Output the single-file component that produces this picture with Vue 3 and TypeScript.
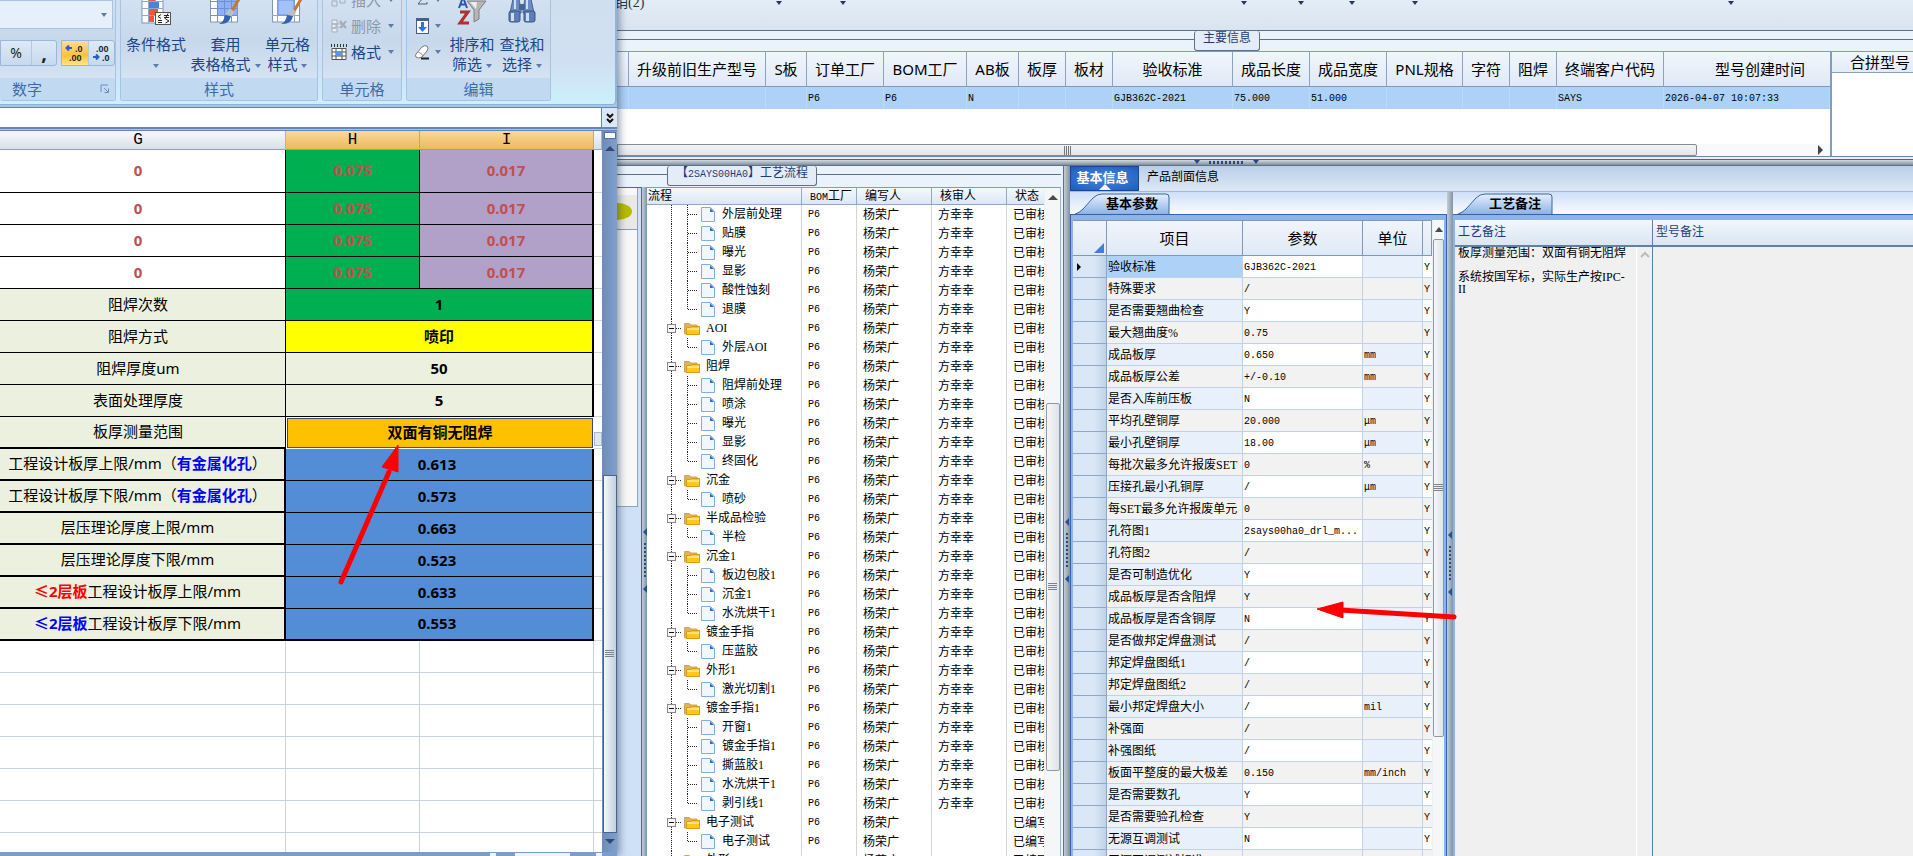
<script setup lang="ts">
interface MainColumn {
  label: string
  width?: number
  value: string
}

interface SheetRow {
  kind: 'green' | 'yellow' | 'pale' | 'orange' | 'blue'
  mark?: string
  tone?: string
  label: string
  note?: string
  value: string
}

interface FlowRow {
  name: string
  folder: boolean
  last: boolean
  reviewer: string
  state: string
}

const mainColumns: MainColumn[] = [
  { label: '', width: 12, value: '' },
  { label: '升级前旧生产型号', width: 137, value: '' },
  { label: 'S板', width: 41, value: '' },
  { label: '订单工厂', width: 77, value: 'P6' },
  { label: 'BOM工厂', width: 83, value: 'P6' },
  { label: 'AB板', width: 52, value: 'N' },
  { label: '板厚', width: 47, value: '' },
  { label: '板材', width: 47, value: '' },
  { label: '验收标准', width: 120, value: 'GJB362C-2021' },
  { label: '成品长度', width: 77, value: '75.000' },
  { label: '成品宽度', width: 77, value: '51.000' },
  { label: 'PNL规格', width: 76, value: '' },
  { label: '字符', width: 47, value: '' },
  { label: '阻焊', width: 47, value: '' },
  { label: '终端客户代码', width: 107, value: 'SAYS' },
  { label: '型号创建时间', value: '2026-04-07 10:07:33' },
]

const sheetRows: SheetRow[] = [
  { kind: 'green', label: '阻焊次数', value: '1' },
  { kind: 'yellow', label: '阻焊方式', value: '喷印' },
  { kind: 'pale', label: '阻焊厚度um', value: '50' },
  { kind: 'pale', label: '表面处理厚度', value: '5' },
  { kind: 'orange', label: '板厚测量范围', value: '双面有铜无阻焊' },
  { kind: 'blue', label: '工程设计板厚上限/mm', note: '有金属化孔', value: '0.613' },
  { kind: 'blue', label: '工程设计板厚下限/mm', note: '有金属化孔', value: '0.573' },
  { kind: 'blue', label: '层压理论厚度上限/mm', value: '0.663' },
  { kind: 'blue', label: '层压理论厚度下限/mm', value: '0.523' },
  { kind: 'blue', mark: '≤2层板', tone: 'red', label: '工程设计板厚上限/mm', value: '0.633' },
  { kind: 'blue', mark: '≤2层板', tone: 'navy', label: '工程设计板厚下限/mm', value: '0.553' },
]

const flowGroups: [string, string[]][] = [
  ['', ['外层前处理', '贴膜', '曝光', '显影', '酸性蚀刻', '退膜']],
  ['AOI', ['外层AOI']],
  ['阻焊', ['阻焊前处理', '喷涂', '曝光', '显影', '终固化']],
  ['沉金', ['喷砂']],
  ['半成品检验', ['半检']],
  ['沉金1', ['板边包胶1', '沉金1', '水洗烘干1']],
  ['镀金手指', ['压蓝胶']],
  ['外形1', ['激光切割1']],
  ['镀金手指1', ['开窗1', '镀金手指1', '撕蓝胶1', '水洗烘干1', '剥引线1']],
  ['电子测试', ['电子测试']],
  ['外形', []],
]

const flowRows: FlowRow[] = flowGroups.flatMap(([group, children], index) => {
  const done = index < 9
  const base = { reviewer: done ? '方幸幸' : '', state: done ? '已审核' : '已编写' }
  const head = group ? [{ name: group, folder: true, last: false, ...base }] : []
  return [
    ...head,
    ...children.map((name, i) => ({ name, folder: false, last: i === children.length - 1, ...base })),
  ]
})

const params: [string, string, string][] = [
  ['验收标准', 'GJB362C-2021', ''],
  ['特殊要求', '/', ''],
  ['是否需要翘曲检查', 'Y', ''],
  ['最大翘曲度%', '0.75', ''],
  ['成品板厚', '0.650', 'mm'],
  ['成品板厚公差', '+/-0.10', 'mm'],
  ['是否入库前压板', 'N', ''],
  ['平均孔壁铜厚', '20.000', 'μm'],
  ['最小孔壁铜厚', '18.00', 'μm'],
  ['每批次最多允许报废SET', '0', '%'],
  ['压接孔最小孔铜厚', '/', 'μm'],
  ['每SET最多允许报废单元', '0', ''],
  ['孔符图1', '2says00ha0_drl_m...', ''],
  ['孔符图2', '/', ''],
  ['是否可制造优化', 'Y', ''],
  ['成品板厚是否含阻焊', 'Y', ''],
  ['成品板厚是否含铜厚', 'N', ''],
  ['是否做邦定焊盘测试', '/', ''],
  ['邦定焊盘图纸1', '/', ''],
  ['邦定焊盘图纸2', '/', ''],
  ['最小邦定焊盘大小', '/', 'mil'],
  ['补强面', '/', ''],
  ['补强图纸', '/', ''],
  ['板面平整度的最大极差', '0.150', 'mm/inch'],
  ['是否需要数孔', 'Y', ''],
  ['是否需要验孔检查', 'Y', ''],
  ['无源互调测试', 'N', ''],
  ['无源互调测试标准', '', 'dB'],
]

const memo = '板厚测量范围：双面有铜无阻焊\n\n系统按国军标，实际生产按IPC-\nII'
const toolbarCarets = [779, 843, 1244, 1301, 1352, 1415, 1731]
</script>

<template>
  <main class="desktop">
    <section class="excel">
      <div class="ribbon">
        <div class="group number">
          <div class="body">
            <button class="format-box" aria-label="数字格式"><i class="caret"></i></button>
            <div class="num-row">
              <div class="seg">
                <button class="percent">%</button>
                <button class="comma">,</button>
              </div>
              <div class="seg decimals">
                <button class="on" aria-label="增加小数位数">
                  <svg width="20" height="20" viewBox="0 0 20 20">
                    <path d="M7 5H2M4 2.500L1.500 5L4 7.500" fill="none" stroke="#2a5fc0" stroke-width="2" />
                    <text x="10" y="9">.0</text><text x="4" y="18">.00</text>
                  </svg>
                </button>
                <button aria-label="减少小数位数">
                  <svg width="20" height="20" viewBox="0 0 20 20">
                    <path d="M1 14H6M4 11.500L6.500 14L4 16.500" fill="none" stroke="#2a5fc0" stroke-width="2" />
                    <text x="4" y="9">.00</text><text x="10" y="18">.0</text>
                  </svg>
                </button>
              </div>
            </div>
          </div>
          <div class="caption">
            <span>数字</span>
            <svg class="launcher" width="10" height="10" viewBox="0 0 10 10">
              <path d="M1 8V1H8M4 4L8 8M8.500 4.500V8.500H4.500" fill="none" stroke="#6b8fbd" />
            </svg>
          </div>
        </div>

        <div class="group styles">
          <div class="body">
            <button class="big">
              <svg width="30" height="28" viewBox="0 0 30 28">
                <rect x="1" y="-2" width="21" height="28" fill="#fff" stroke="#7f95b8" />
                <path d="M1 4.500H22M1 11.500H22M1 18.500H22M7.500 0V26M14.500 0V26" stroke="#93a8c8" />
                <path d="M8 0h6v4H8zM8 12h9v6H8z" fill="#f0573a" />
                <path d="M8 5h10v6H8z" fill="#4a80e6" />
                <path d="M8 19h5v6H8z" fill="#f0573a" />
                <rect x="14.500" y="15.500" width="15" height="12" fill="#f6f6f6" stroke="#555" />
                <path d="M20 17.500L17 19.500L20 21.500M17 23.500H21M17 25.500H21M24.500 22L28 24L24.500 26M23 18.500h5M23 20.500h5M27 16.500L24 22" fill="none" stroke="#222" />
              </svg>
              <span>条件格式</span>
              <span class="solo"><i class="caret"></i></span>
            </button>
            <button class="big">
              <svg width="32" height="28" viewBox="0 0 32 28">
                <rect x="1.500" y="-2" width="27" height="27" fill="#fff" stroke="#7f95b8" />
                <path d="M8 3h20v15H8z" fill="#8db0f2" />
                <path d="M1 4.500H28M1 11.500H28M1 18.500H28M8.500 0V25M15.500 0V25M22.500 0V25" stroke="#6f8fd0" />
                <path d="M30 2L23 14" stroke="#c07a34" stroke-width="3" stroke-linecap="round" />
                <path d="M23 13L19 19" stroke="#b9bfc8" stroke-width="6" />
                <path d="M22 19Q20 28 10 27Q15 25 16 18Z" fill="#2f62b5" />
              </svg>
              <span>套用</span>
              <span>表格格式<i class="caret"></i></span>
            </button>
            <button class="big">
              <svg width="32" height="28" viewBox="0 0 32 28">
                <rect x="1.500" y="-2" width="27" height="27" fill="#fff" stroke="#7f95b8" />
                <path d="M1 18.500H28M6.500 0V25M23.500 0V25" stroke="#93a8c8" />
                <path d="M7 3h16v15H7z" fill="#a3c2fa" stroke="#6a90e0" />
                <path d="M30 2L23 14" stroke="#c07a34" stroke-width="3" stroke-linecap="round" />
                <path d="M23 13L19 19" stroke="#b9bfc8" stroke-width="6" />
                <path d="M22 19Q20 28 10 27Q15 25 16 18Z" fill="#2f62b5" />
              </svg>
              <span>单元格</span>
              <span>样式<i class="caret"></i></span>
            </button>
          </div>
          <div class="caption"><span>样式</span></div>
        </div>

        <div class="group cells">
          <div class="body">
            <button class="small off">
              <svg width="18" height="18" viewBox="0 0 18 18"><path d="M2 3h5v4H2zM2 10h5v5H2zM10 8h5v4h-5z" fill="none" stroke="#a3adba" /></svg>
              插入<i class="caret"></i>
            </button>
            <button class="small off">
              <svg width="18" height="18" viewBox="0 0 18 18">
                <path d="M2 3h5v4H2zM2 7h4v4H2zM2 11h5v4H2zM7 7h4v3H7z" fill="#e9edf3" stroke="#a3adba" />
                <path d="M10 4L16 11M16 4L11 11" stroke="#a3adba" stroke-width="2" />
              </svg>
              删除<i class="caret"></i>
            </button>
            <button class="small">
              <svg width="18" height="18" viewBox="0 0 18 18">
                <path d="M1 2.500H17" stroke="#333" stroke-width="3" stroke-dasharray="1 2" />
                <path d="M2 5.500h14v11H2zM2 9H16M2 13H16M6 5V16M12 5V16" fill="#fff" stroke="#555" />
                <path d="M6 8h6v5H6z" fill="#5b95ea" />
              </svg>
              格式<i class="caret"></i>
            </button>
          </div>
          <div class="caption"><span>单元格</span></div>
        </div>

        <div class="group edit">
          <div class="body">
            <div class="stack">
              <button class="small" aria-label="自动求和">
                <svg width="18" height="18" viewBox="0 0 18 18"><path d="M12 3V2H5L9 7L4 13H13V11" fill="none" stroke="#4a5f86" /></svg>
                <i class="caret"></i>
              </button>
              <button class="small" aria-label="填充">
                <svg width="18" height="18" viewBox="0 0 18 18">
                  <rect x="2.500" y="1.500" width="12" height="15" fill="#fff" stroke="#4a5f86" />
                  <path d="M2 3H15" stroke="#4a5f86" stroke-width="2" />
                  <path d="M7 5h3v5h3l-4.500 5L4 10h3z" fill="#2f74e0" />
                </svg>
                <i class="caret"></i>
              </button>
              <button class="small" aria-label="清除">
                <svg width="18" height="18" viewBox="0 0 18 18">
                  <path d="M2 11L8 4Q10 2 13 3Q15 5 13 8L8 14Q4 16 2 14Q1 13 2 11Z" fill="#fff" stroke="#777" />
                  <path d="M4 9Q8 10 9 13" fill="none" stroke="#999" />
                  <path d="M7 15.500H15" stroke="#222" stroke-width="2" />
                </svg>
                <i class="caret"></i>
              </button>
            </div>
            <button class="big">
              <svg width="30" height="28" viewBox="0 0 30 28">
                <path d="M2 11L6 0L10 11M3 7.500H9" fill="none" stroke="#2c56a8" stroke-width="2" />
                <path d="M3 15H11L3 26H12" fill="none" stroke="#b03030" stroke-width="3" />
                <path d="M10 4H29L22 13V22L17 25V13Z" fill="#b9b5b0" stroke="#7c8088" />
                <path d="M13 5H20L19 12Z" fill="#eceef1" />
              </svg>
              <span>排序和</span>
              <span>筛选<i class="caret"></i></span>
            </button>
            <button class="big">
              <svg width="30" height="28" viewBox="0 0 30 28">
                <path d="M6 2h6l2 11v3H3Z" fill="#6d8dc0" stroke="#4b6496" />
                <path d="M18 2h6l3 14H16v-3Z" fill="#6d8dc0" stroke="#4b6496" />
                <path d="M12 7h6v6h-6z" fill="#48659a" />
                <rect x="2" y="14" width="11" height="11" rx="2" fill="#5d7fb8" stroke="#3b5486" />
                <rect x="17" y="14" width="11" height="11" rx="2" fill="#5d7fb8" stroke="#3b5486" />
                <path d="M4 16h3v8H4zM19 16h3v8h-3zM7 3h2v9H7zM19 3h2v9h-2z" fill="#cfdcf2" />
              </svg>
              <span>查找和</span>
              <span>选择<i class="caret"></i></span>
            </button>
          </div>
          <div class="caption"><span>编辑</span></div>
        </div>
      </div>

      <div class="formula">
        <input aria-label="编辑栏" />
        <button aria-label="展开编辑栏">
          <svg width="10" height="12" viewBox="0 0 10 12"><path d="M2 2L5 5L8 2M2 7L5 10L8 7" fill="none" stroke="#111" stroke-width="2" /></svg>
        </button>
      </div>

      <div class="sheet-area">
        <div class="sheet-clip">
          <table class="sheet">
            <colgroup><col class="g" /><col class="h" /><col /><col class="edge" /></colgroup>
            <thead>
              <tr><th class="pad">G</th><th class="hot">H</th><th class="hot">I</th><th></th></tr>
            </thead>
            <tbody>
              <tr v-for="n in 4" :key="'s' + n" class="split" :class="{ tall: n === 1 }">
                <td class="pad">0</td><td class="fill-green">0.075</td><td class="fill-purple">0.017</td><td class="edge"></td>
              </tr>
              <tr v-for="row in sheetRows" :key="row.mark + row.label + row.value" :class="'row-' + row.kind">
                <td class="label pad">
                  <b v-if="row.mark" :class="row.tone">{{ row.mark }}</b>{{ row.label }}<template v-if="row.note">（<b class="navy">{{ row.note }}</b>）</template>
                </td>
                <td class="value" colspan="2">{{ row.value }}</td>
                <td class="edge"><i v-if="row.kind === 'orange'" class="drop"></i></td>
              </tr>
              <tr v-for="n in 7" :key="'b' + n" class="blank"><td></td><td></td><td></td><td class="edge"></td></tr>
            </tbody>
          </table>
        </div>
        <div class="xl-scroll">
          <i class="splitbox"></i>
          <i class="tri up"></i>
          <div class="gap"></div>
          <div class="thumb"><i class="grip"></i></div>
          <i class="tri down"></i>
        </div>
      </div>
      <div class="xl-bottom"><i class="a"></i><i class="b"></i><i class="c"></i></div>
    </section>

    <section class="app">
      <div class="toolbar">
        <span class="tool-text">销(2)</span>
        <i v-for="x in toolbarCarets" :key="x" class="caret dark" :style="{ left: x - 620 + 'px' }"></i>
      </div>

      <div class="main-info">
        <div class="legend center"><span>主要信息</span></div>
        <div class="main-row">
          <div class="main-left">
            <table class="main-table">
              <colgroup><col v-for="(c, i) in mainColumns" :key="i" :style="c.width ? { width: c.width + 'px' } : {}" /></colgroup>
              <thead><tr><th v-for="(c, i) in mainColumns" :key="i">{{ c.label }}</th></tr></thead>
              <tbody><tr><td v-for="(c, i) in mainColumns" :key="i" class="half">{{ c.value }}</td></tr></tbody>
            </table>
            <div class="space"></div>
            <div class="hscroll"><div class="hthumb"><i></i></div><i class="right"></i></div>
          </div>
          <div class="merge"><div class="merge-head">合拼型号</div></div>
        </div>
      </div>
      <div class="hsplit"><i class="tri down"></i><i class="dots"></i><i class="tri down"></i></div>

      <div class="lower">
        <div class="flow">
          <div class="legend"><span>【<em class="half">2SAYS00HA0</em>】工艺流程</span></div>
          <div class="flow-row">
            <div class="side">
              <div class="side-box"><div class="side-head"><i></i></div></div>
            </div>
            <div class="vsplit"><i class="tri left"></i><i class="dots"></i><i class="tri left"></i></div>
            <div class="tree-box">
              <table class="tree">
                <colgroup><col class="c1" /><col class="c2" /><col class="c3" /><col class="c3" /><col /></colgroup>
                <thead><tr><th>流程</th><th><em class="half">BOM</em>工厂</th><th>编写人</th><th>核审人</th><th>状态</th></tr></thead>
                <tbody>
                  <tr v-for="(row, i) in flowRows" :key="i">
                    <td>
                      <div class="node">
                        <svg v-if="row.folder" width="56" height="19" viewBox="0 0 56 19">
                          <path d="M24.500 0V19M29 9.500H35" stroke="#222" stroke-dasharray="1 1" />
                          <rect x="20.500" y="5.500" width="8" height="8" fill="#f6f6f6" stroke="#8a8a8a" />
                          <path d="M22 9.500H27" stroke="#111" />
                          <path d="M37.500 15V4.500H42L44 6H50V15Z" fill="#dfb35a" stroke="#c9a66a" />
                          <path d="M39.500 15.500V8.500H43L45 7.500H52.500V15.500Z" fill="#fdc81c" stroke="#e09a10" />
                          <path d="M40 9H52V11H40Z" fill="#ffe477" />
                        </svg>
                        <svg v-else width="72" height="19" viewBox="0 0 72 19">
                          <path d="M24.500 0V19M41 9.500H51" stroke="#222" stroke-dasharray="1 1" />
                          <path :d="row.last ? 'M40.500 0V10' : 'M40.500 0V19'" stroke="#222" stroke-dasharray="1 1" />
                          <path d="M54.500 2.500H63.500L67.500 6.500V16.500H54.500Z" fill="#f0f7ff" stroke="#7fade8" />
                          <path d="M63 3V7H67Z" fill="#2f6fd0" />
                        </svg>
                        <span>{{ row.name }}</span>
                      </div>
                    </td>
                    <td class="half">P6</td><td>杨荣广</td><td>{{ row.reviewer }}</td><td>{{ row.state }}</td>
                  </tr>
                </tbody>
              </table>
              <div class="vscroll tree-scroll">
                <i class="tri up"></i><div class="before"></div><div class="thumb"><i class="grip"></i></div><div class="after"></div>
              </div>
            </div>
          </div>
        </div>
        <div class="vsplit outer"><i class="tri left"></i><i class="dots"></i><i class="tri left"></i></div>

        <div class="detail">
          <div class="tabs">
            <button class="active">基本信息</button>
            <button>产品剖面信息</button>
          </div>
          <div class="detail-row">
            <div class="pane params">
              <div class="subtabs">
                <button>
                  <svg width="100" height="22" viewBox="0 0 100 22">
                    <defs><linearGradient id="tabfill" x1="0" y1="0" x2="0" y2="1"><stop offset="0" stop-color="#e6effb" /><stop offset="1" stop-color="#8db3e6" /></linearGradient></defs>
                    <path d="M4 22Q8 21 12 17L22 6Q26 2 31 2H95Q98 2 98 5V22" fill="url(#tabfill)" stroke="#3567a8" />
                  </svg>
                  <span>基本参数</span>
                </button>
              </div>
              <div class="pane-body">
                <div class="grid-clip">
                  <table class="grid">
                    <colgroup><col class="mark" /><col /><col class="val" /><col class="unit" /><col class="flag" /></colgroup>
                    <thead>
                      <tr><th><i class="corner"></i></th><th>项目</th><th>参数</th><th>单位</th><th></th></tr>
                    </thead>
                    <tbody>
                      <tr v-for="(p, i) in params" :key="p[0]" :class="{ current: i === 0 }">
                        <td class="mark"><i v-if="i === 0"></i></td>
                        <td>{{ p[0] }}</td>
                        <td class="val half">{{ p[1] }}</td><td class="half">{{ p[2] }}</td><td class="val flag half">Y</td>
                      </tr>
                    </tbody>
                  </table>
                </div>
                <div class="vscroll param-scroll">
                  <i class="tri up"></i><div class="thumb"><i class="grip"></i></div>
                </div>
              </div>
            </div>
            <div class="vsplit narrow"><i class="tri left"></i><i class="dots"></i><i class="tri left"></i></div>
            <div class="pane remarks">
              <div class="subtabs">
                <button>
                  <svg width="100" height="22" viewBox="0 0 100 22">
                    <path d="M4 22Q8 21 12 17L22 6Q26 2 31 2H95Q98 2 98 5V22" fill="url(#tabfill)" stroke="#3567a8" />
                  </svg>
                  <span>工艺备注</span>
                </button>
              </div>
              <div class="remark-body">
                <div class="remark-left">
                  <label for="memo">工艺备注</label>
                  <div class="memo-row">
                    <textarea id="memo" readonly :value="memo"></textarea>
                    <div class="memo-scroll">
                      <svg width="10" height="8" viewBox="0 0 10 8"><path d="M1 6L5 2L9 6" fill="none" stroke="#bbb" stroke-width="2" /></svg>
                    </div>
                  </div>
                </div>
                <div class="remark-right">
                  <label for="model-memo">型号备注</label>
                  <textarea id="model-memo" readonly></textarea>
                </div>
              </div>
            </div>
          </div>
        </div>
      </div>
    </section>

    <svg class="notes" aria-hidden="true">
      <g fill="#f00" stroke="#f00">
        <path d="M341 582L389 472" stroke-width="5" stroke-linecap="round" />
        <path d="M398 445L382 467L398 472Z" />
        <path d="M1454 617L1340 610" stroke-width="5" stroke-linecap="round" />
        <path d="M1317 609L1343 602V618Z" />
      </g>
    </svg>
  </main>
</template>

<style>
body {
  margin: 0;
  overflow: hidden;
}
</style>

<style scoped>
* {
  box-sizing: border-box;
}
.desktop {
  position: relative;
  display: flex;
  height: 100vh;
  overflow: hidden;
  color: #000;
  font: 12px/16px "Liberation Serif", "Noto Sans CJK SC", sans-serif;
}
button {
  padding: 0;
  border: 0;
  background: none;
  font: inherit;
  color: inherit;
}
table {
  width: 100%;
  table-layout: fixed;
  border-collapse: separate;
  border-spacing: 0;
}
th,
td {
  padding: 0;
  font-weight: normal;
  white-space: nowrap;
  overflow: hidden;
}
.half {
  font-family: "Liberation Mono", monospace;
  font-size: 10px;
  font-style: normal;
}
em.half { line-height: 10px; }
.notes {
  position: absolute;
  inset: 0;
  z-index: 3;
  width: 100%;
  height: 100%;
  pointer-events: none;
}
.caret {
  display: inline-block;
  border: 3px solid transparent;
  border-top: 4px solid #5c7cab;
  border-bottom: 0;
}
.tri {
  display: block;
  flex: none;
  border: 5px solid transparent;
}
.tri.up {
  border-top: 0;
  border-bottom-color: #4a4a4a;
}
.tri.down {
  border-bottom: 0;
  border-top-color: #2c4a80;
}
.tri.left {
  border-width: 4px;
  border-left: 0;
  border-right-color: #28508c;
}
.grip {
  display: block;
  width: 9px;
  height: 8px;
  background: repeating-linear-gradient(#7d838c 0 1px, transparent 1px 2px);
}

/* spreadsheet window */
.excel {
  position: relative;
  z-index: 2;
  display: flex;
  flex-direction: column;
  flex: 0 0 617px;
  background: #a9c5e6;
  box-shadow: 2px 0 8px rgba(20, 40, 70, 0.5);
  font-family: "Noto Sans", "Noto Sans CJK SC", sans-serif;
}
.ribbon {
  display: flex;
  flex: none;
  gap: 4px;
  height: 105px;
  padding-bottom: 3px;
  border-right: 2px solid #8db5e0;
  border-bottom: 1px solid #8eb1d8;
  border-radius: 0 0 5px 0;
  background: linear-gradient(#cfdff0, #d0e0f2 60%, #ccf0fd);
  color: #1c4587;
  font-size: 15px;
  line-height: 20px;
}
.group {
  display: flex;
  flex-direction: column;
  border: 1px solid #a5c3e3;
  border-top: 0;
  border-radius: 0 0 3px 3px;
  background: linear-gradient(#d3e1f1, #c7d8ec 40%, #dce9f6);
}
.number { width: 116px; border-left: 0; }
.styles { width: 198px; }
.cells { width: 80px; }
.edit { width: 145px; }
.group .body {
  display: flex;
  flex: 1;
  min-height: 0;
  align-items: flex-end;
  overflow: hidden;
}
.caption {
  display: flex;
  flex: none;
  height: 22px;
  align-items: center;
  justify-content: center;
  border-radius: 0 0 3px 3px;
  background: #c1d9f1;
  color: #3e6aaa;
}
.number .caption {
  justify-content: space-between;
  padding: 0 5px 0 12px;
}
.number .body {
  flex-direction: column;
  align-items: flex-start;
  justify-content: flex-end;
  padding-bottom: 12px;
}
.format-box {
  display: flex;
  width: 113px;
  height: 30px;
  align-items: center;
  justify-content: flex-end;
  margin-bottom: 11px;
  padding-right: 5px;
  border: 1px solid #a9c3e2;
  border-left: 0;
  background: #e6f0fb;
}
.num-row {
  display: flex;
  gap: 4px;
}
.seg {
  display: flex;
  height: 26px;
  border: 1px solid #9ab6da;
  border-radius: 0 3px 3px 0;
  background: linear-gradient(#dde9f6, #c7d9ee);
  color: #222;
}
.seg button + button {
  border-left: 1px solid #b2c8e3;
}
.percent { width: 30px; font-size: 14px; }
.comma { width: 25px; font-size: 20px; font-weight: bold; line-height: 16px; }
.decimals button {
  display: grid;
  width: 26px;
  place-items: center;
}
.decimals .on { background: linear-gradient(#fbdc9a, #ffc23c 60%, #ffe38a); }
.decimals text { font: bold 9px "Liberation Sans", sans-serif; fill: #222; }
.styles .body {
  justify-content: space-between;
  padding: 0 7px 4px 5px;
}
.big {
  display: flex;
  flex: none;
  flex-direction: column;
  align-items: center;
  white-space: nowrap;
}
.big svg {
  flex: none;
  margin-bottom: 9px;
}
.big .caret,
.small .caret {
  margin-left: 4px;
  vertical-align: middle;
}
.big .solo {
  height: 20px;
}
.big .solo .caret {
  margin: 0;
}
.cells .body,
.stack {
  flex-direction: column;
  align-items: flex-start;
  justify-content: flex-end;
  padding: 0 0 13px 7px;
}
.stack {
  display: flex;
  width: 40px;
}
.edit .big {
  width: 50px;
  padding-bottom: 4px;
}
.small {
  display: flex;
  flex: none;
  height: 26px;
  align-items: center;
  gap: 3px;
  white-space: nowrap;
}
.stack .small .caret { margin-left: 0; }
.off { color: #8d99a9; }
.formula {
  display: flex;
  flex: none;
  height: 22px;
  margin-top: 2px;
  border-top: 1px solid #6485b5;
  border-bottom: 2px solid #6485b5;
}
.formula input {
  flex: 1;
  min-width: 0;
  padding: 0;
  border: 0;
  border-right: 1px solid #6485b5;
  background: #fff;
}
.formula button {
  display: grid;
  width: 15px;
  place-items: center;
  background: #dbe8f7;
}
.sheet-area {
  display: flex;
  flex: 1;
  min-height: 0;
  margin-top: 1px;
  border-top: 1px solid #6485b5;
  background: #fff;
}
.sheet-clip {
  flex: 1;
  min-width: 0;
  overflow: hidden;
}
.sheet { font-size: 15px; line-height: 20px; text-align: center; }
.sheet .g { width: 286px; }
.sheet .h { width: 134px; }
.sheet col.edge { width: 8px; }
.sheet .pad { padding-right: 9px; }
.sheet th {
  height: 19px;
  border-right: 1px solid #a5b4c8;
  border-bottom: 1px solid #8ea2be;
  background: linear-gradient(#f7f9fb, #d9dfe8);
  font: 16px/18px "Liberation Mono", monospace;
}
.sheet .hot {
  border-right-color: #f0974a;
  border-bottom-color: #d98f45;
  background: linear-gradient(#f8d79f, #efba57);
}
.sheet td {
  height: 32px;
  padding-bottom: 2px;
  border-right: 1px solid #000;
  border-bottom: 1px solid #000;
}
.sheet .tall td { height: 43px; }
.sheet .split td { color: #c0504d; font-weight: bold; }
.sheet td.fill-green { background: #00b050; }
.sheet td.fill-purple { border-right-width: 2px; background: #b1a0c7; }
.sheet td.edge,
.sheet .split td.edge {
  border-right: 0;
  border-bottom-color: #d0d7e5;
}
.sheet .label { background: #ebf1de; }
.sheet .value { border-right-width: 2px; font-weight: bold; }
.sheet .red { color: #f00; }
.sheet .navy { color: #00f; }
.row-green .value { background: #00b050; }
.row-yellow .value { background: #ff0; }
.row-pale .value { background: #ebf1de; }
.sheet .row-orange .value {
  border: 1px solid #fff;
  outline: 1px solid #3a4a80;
  outline-offset: -2px;
  background: #ffc000;
}
.sheet .row-orange .label,
.sheet .row-blue .label { border-bottom-width: 2px; }
.row-blue .value { padding-right: 4px; background: #538dd5; }
.sheet .row-blue .label { border-right-width: 2px; }
.sheet .row-blue:nth-child(15) .value { border-bottom-width: 2px; }
.sheet .blank td { border-color: #c9d2de; }
.drop {
  display: block;
  width: 8px;
  height: 14px;
  margin-top: 14px;
  border: 1px solid #a9b8cc;
  background: #dfe7f2;
}
.xl-scroll {
  display: flex;
  flex: 0 0 15px;
  flex-direction: column;
  align-items: center;
  background: linear-gradient(90deg, #6d8cbb, #7f9fcc);
}
.splitbox {
  width: 12px;
  height: 7px;
  margin: 1px 0 7px;
  border: 1px solid #54719f;
  background: #fff;
}
.xl-scroll .tri.up { border-bottom-color: #33496f; }
.xl-scroll .gap { flex: 326; }
.xl-scroll .thumb {
  display: grid;
  flex: 358;
  width: 14px;
  place-items: center;
  border: 1px solid #46648f;
  background: linear-gradient(90deg, #f4f7fb, #c5cfdf);
}
.xl-scroll .tri.down { margin: 6px 0 8px; }
.xl-bottom {
  display: flex;
  flex: none;
  height: 4px;
  padding: 1px 15px 0 490px;
  background: #7c9dcb;
}
.xl-bottom i { background: #eef3fa; }
.xl-bottom .a { width: 6px; margin-right: 19px; }
.xl-bottom .b { width: 55px; margin-right: 26px; }
.xl-bottom .c { width: 6px; }

/* production data application */
.app {
  display: flex;
  flex: 1;
  min-width: 0;
  flex-direction: column;
  background: #eaf3fc;
}
.toolbar {
  position: relative;
  flex: none;
  height: 31px;
  border-bottom: 1px solid #5b7186;
  background: linear-gradient(#e3edf7, #d9e4f0);
  overflow: hidden;
  color: #1d3352;
}
.tool-text {
  display: block;
  margin: -7px 0 0 -3px;
  font-size: 14px;
  line-height: 20px;
}
.toolbar .caret {
  position: absolute;
  top: 1px;
}
.caret.dark { border-top-color: #253a5c; }
.main-info { flex: none; }
.legend {
  display: flex;
  height: 21px;
  padding-left: 50px;
  background: linear-gradient(#5b7186, #5b7186) 0 8px / 100% 1px no-repeat;
  color: #1f3a7a;
}
.legend.center {
  height: 20px;
  justify-content: center;
  padding-left: 0;
  padding-right: 76px;
}
.legend span {
  height: 20px;
  padding: 0 8px;
  border: 1px solid #5b7186;
  border-top: 0;
  border-radius: 3px;
  background: #e4edf7;
  line-height: 15px;
}
.main-row {
  display: flex;
  height: 106px;
  border-top: 1px solid #7d9cbf;
  border-bottom: 1px solid #6b88ab;
  background: #fff;
}
.main-left {
  display: flex;
  flex: 1;
  min-width: 0;
  flex-direction: column;
  border-right: 2px solid #7f9cc4;
}
.main-table th {
  height: 35px;
  border-right: 1px solid #8aa3c4;
  border-bottom: 1px solid #7f98bb;
  background: linear-gradient(#f1f6fc, #dfe9f6);
  font: 15px/20px "Noto Sans", "Noto Sans CJK SC", sans-serif;
}
.main-table th:last-child { border-right: 0; padding-left: 26px; }
.main-table td {
  height: 22px;
  padding: 2px 0 0 1px;
  border-right: 1px solid #bbd9f9;
  background: #aed2f7;
}
.space { flex: 1; }
.hscroll {
  display: flex;
  height: 12px;
  align-items: center;
  background: #f8f9fa;
}
.hthumb {
  display: grid;
  flex: 0 0 89%;
  height: 12px;
  padding-right: 178px;
  place-items: center;
  border: 1px solid #858b95;
  border-radius: 0 2px 2px 0;
  background: linear-gradient(#f2f4f6, #e2e5ea);
}
.hthumb i {
  width: 7px;
  height: 9px;
  background: repeating-linear-gradient(90deg, #777 0 1px, transparent 1px 2px);
}
.right {
  margin: 0 7px 0 auto;
  border: 5px solid transparent;
  border-right: 0;
  border-left-color: #444;
}
.merge { flex: 0 0 81px; }
.merge-head {
  height: 21px;
  padding-left: 18px;
  border-bottom: 1px solid #8aa3c4;
  background: linear-gradient(#f1f6fc, #e2ebf7);
  font: 15px/20px "Noto Sans", "Noto Sans CJK SC", sans-serif;
  white-space: nowrap;
}
.hsplit {
  display: flex;
  flex: none;
  height: 9px;
  align-items: flex-end;
  justify-content: center;
  gap: 9px;
  padding: 0 78px 1px 0;
  border-bottom: 1px solid #5e7388;
  background: linear-gradient(#e8eef7 0 2px, #4f6787 2px 3px, #d2dae2 3px, #818f9e);
}
.hsplit .tri { border-width: 4px 3px 0; }
.hsplit .dots {
  width: 35px;
  height: 3px;
  background: repeating-linear-gradient(90deg, #2c4a80 0 2px, transparent 2px 4px);
}
.lower {
  display: flex;
  flex: 1;
  min-height: 0;
}
.flow {
  display: flex;
  flex: 0 0 447px;
  min-height: 0;
  flex-direction: column;
  padding-right: 2px;
  border-right: 1px solid #5b7186;
}
.flow-row {
  display: flex;
  flex: 1;
  min-height: 0;
}
.side {
  flex: 0 0 25px;
  padding-right: 3px;
  border-top: 1px solid #3e6aab;
  border-right: 1px solid #3e6aab;
  background: #cfe1f7;
}
.side-box {
  height: 319px;
  padding-top: 7px;
  border-right: 1px solid #8fa3bd;
  border-bottom: 1px solid #8fa3bd;
  background: #f8f8f8;
}
.side-head {
  height: 35px;
  padding-top: 8px;
  border-bottom: 1px solid #8a9cb5;
  background: #ebe9e6;
  overflow: hidden;
}
.side-head i {
  display: block;
  width: 30px;
  height: 17px;
  margin-left: -15px;
  border-radius: 50%;
  background: #b8bd00;
}
.vsplit {
  display: flex;
  flex: 0 0 5px;
  min-width: 0;
  flex-direction: column;
  align-items: center;
  justify-content: center;
  gap: 7px;
  padding-top: 78px;
  background: linear-gradient(90deg, #c4cdd6, #8292a3);
}
.vsplit .dots {
  width: 2px;
  height: 35px;
  background: repeating-linear-gradient(#2c4a80 0 2px, transparent 2px 4px);
}
.vsplit.outer { flex-basis: 6px; }
.tree-box {
  display: flex;
  flex: 1;
  min-width: 0;
  overflow: hidden;
  border-top: 1px solid #7d9cbf;
  border-right: 1px solid #9fb4cc;
  background: #fff;
}
.tree { flex: 1; align-self: flex-start; }
.c1 { width: 155px; }
.c2 { width: 55px; }
.c3 { width: 75px; }
.tree th {
  height: 17px;
  padding-left: 8px;
  border-right: 1px solid #8fa9cb;
  border-bottom: 1px solid #8fa9cb;
  background: linear-gradient(#f3f8fd, #dbe8f5);
  line-height: 16px;
  text-align: left;
}
.tree th:first-child { padding-left: 1px; }
.tree td {
  height: 19px;
  padding-left: 6px;
  border-right: 1px solid #d5d5d5;
  line-height: 18px;
}
.tree td:first-child { padding-left: 0; }
.tree th:last-child,
.tree td:last-child { border-right: 0; text-overflow: clip; }
.node {
  display: flex;
  height: 19px;
  gap: 3px;
}
.node svg { flex: none; }
.vscroll {
  display: flex;
  flex: 0 0 16px;
  flex-direction: column;
  align-items: center;
  border-left: 1px solid #eef0f3;
  background: #f5f6f8;
}
.vscroll .thumb {
  display: grid;
  width: 14px;
  place-items: center;
  border: 1px solid #9298a2;
  border-radius: 2px;
  background: linear-gradient(90deg, #f6f7f9, #dfe3e8);
}
.vscroll .tri.up { margin: 7px 0; }
.tree-scroll .before { flex: 197; }
.tree-scroll .thumb { flex: 367; }
.tree-scroll .after { flex: 85; }
.detail {
  display: flex;
  flex: 1;
  min-width: 0;
  flex-direction: column;
}
.tabs {
  display: flex;
  flex: none;
  height: 26px;
  border-bottom: 1px solid #a3b9d3;
  background: linear-gradient(#b9cfe9, #dde8f4);
}
.tabs button {
  padding: 0 8px 3px;
}
.tabs .active {
  position: relative;
  width: 69px;
  padding: 0 4px 3px 0;
  border: 1px solid #17479a;
  background: radial-gradient(#4488e2, #1f5cba);
  color: #fff;
  font: bold 13px/16px "Noto Sans CJK SC", sans-serif;
}
.tabs .active::after {
  position: absolute;
  bottom: 0;
  left: 28px;
  border: 6px solid transparent;
  border-top: 0;
  border-bottom-color: #fff;
  content: "";
}
.detail-row {
  display: flex;
  flex: 1;
  min-height: 0;
}
.pane {
  display: flex;
  min-width: 0;
  min-height: 0;
  flex-direction: column;
}
.params { flex: 0 0 377px; }
.remarks { flex: 1; }
.subtabs {
  flex: none;
  height: 23px;
  border-bottom: 1px solid #3264a8;
  background: linear-gradient(#cddff8, #fafcff);
}
.subtabs button {
  display: grid;
  align-items: center;
  margin-left: 1px;
  font: bold 13px/16px "Noto Sans CJK SC", sans-serif;
}
.subtabs svg,
.subtabs span { grid-area: 1 / 1; }
.subtabs span { padding-left: 22px; }
.subtabs svg { display: block; }
.pane-body {
  display: flex;
  flex: 1;
  min-height: 0;
  padding: 5px 2px 0;
  border: solid #3264a8;
  border-width: 0 1px;
  background: #8db3e8;
}
.grid-clip {
  flex: 1;
  min-width: 0;
  overflow: hidden;
  border-top: 1px solid #7e97bb;
}
.grid .mark { width: 34px; }
.grid .val { width: 120px; }
.grid .unit { width: 60px; }
.grid col.flag { width: 9px; }
.grid th {
  position: relative;
  height: 35px;
  border-right: 1px solid #7e97bb;
  border-bottom: 1px solid #7e97bb;
  background: linear-gradient(#f0f5fc, #dfe9f6);
  font: 15px/20px "Noto Sans CJK SC", sans-serif;
}
.grid td {
  height: 22px;
  padding-left: 1px;
  border-right: 1px solid #c0d2ea;
  border-bottom: 1px solid #c0d2ea;
  background: #e8f1fb;
  line-height: 18px;
}
.grid td.half { padding-top: 2px; }
.grid td.val { background: #fff; }
.grid td.val.flag { border-right: 0; }
.grid tr:nth-child(even) td { background: #f2f2f2; }
.grid tr.current td:nth-child(2) { background: #aed2f7; }
.grid tbody tr td.mark {
  border-color: #8fa7c6;
  background: linear-gradient(90deg, #d9e7f6 65%, #bfd2e7);
}
.grid td.mark i {
  display: block;
  width: 0;
  margin-left: 3px;
  border: 4px solid transparent;
  border-right: 0;
  border-left-color: #000;
}
.corner {
  position: absolute;
  right: 2px;
  bottom: 2px;
  border-bottom: 10px solid #3f7fd6;
  border-left: 10px solid transparent;
}
.param-scroll { flex-basis: 12px; }
.param-scroll .tri { border-width: 0 4px 5px; }
.param-scroll .thumb { flex: 0 0 498px; width: 11px; }
.narrow { flex-basis: 6px; }
.remark-body {
  display: flex;
  flex: 1;
  min-height: 0;
  padding: 5px 0 0 2px;
  background: #8db3e8;
}
.remark-left,
.remark-right {
  display: flex;
  flex-direction: column;
}
.remark-left {
  flex: 0 0 198px;
  border-right: 1px solid #5f7ea8;
}
.remark-right { flex: 1; }
.remark-body label {
  flex: none;
  height: 27px;
  padding-left: 3px;
  border-bottom: 2px solid #62809f;
  background: linear-gradient(#f1f7fd, #dae6f2);
  color: #1f3a7a;
  line-height: 25px;
}
.memo-row {
  display: flex;
  flex: 1;
  min-height: 0;
}
.remark-body textarea {
  flex: 1;
  min-width: 0;
  padding: 0 0 0 3px;
  border: 0;
  outline: 0;
  resize: none;
  overflow: hidden;
  background: #f0f0f0;
  color: #000;
  font: inherit;
  line-height: 12px;
}
.memo-scroll {
  flex: 0 0 16px;
  padding-left: 3px;
  border-left: 1px solid #fff;
  background: #f0f0f0;
}
</style>
